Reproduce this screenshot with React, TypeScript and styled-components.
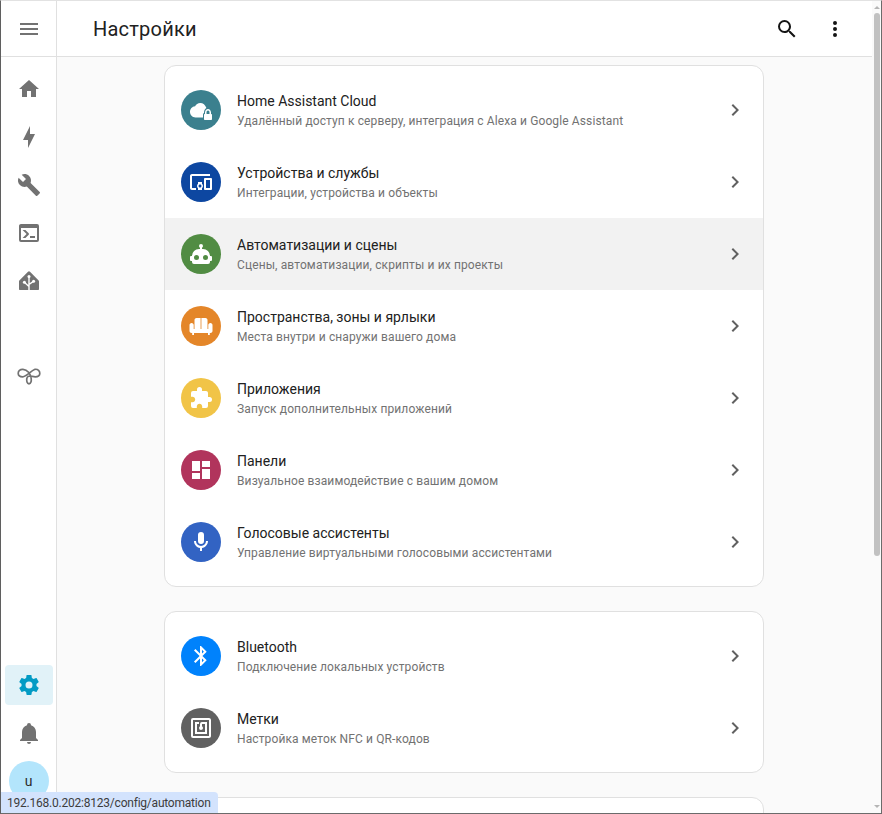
import React from "react";
import styled, { createGlobalStyle } from "styled-components";

const icons = {
  menu: "M3,6H21V8H3V6M3,11H21V13H3V11M3,16H21V18H3V16Z",
  home: "M10,20V14H14V20H19V12H22L12,3L2,12H5V20H10Z",
  bolt: "M11 15H6L13 1V9H18L11 23V15Z",
  wrench:
    "M22.7,19L13.6,9.9C14.5,7.6 14,4.9 12.1,3C10.1,1 7.1,0.6 4.7,1.7L9,6L6,9L1.6,4.7C0.4,7.1 0.9,10.1 2.9,12.1C4.8,14 7.5,14.5 9.8,13.6L18.9,22.7C19.3,23.1 19.9,23.1 20.3,22.7L22.6,20.4C23.1,20 23.1,19.3 22.7,19Z",
  console:
    "M20,19V7H4V19H20M20,3A2,2 0 0,1 22,5V19A2,2 0 0,1 20,21H4A2,2 0 0,1 2,19V5C2,3.89 2.9,3 4,3H20M13,17V15H18V17H13M9.58,13L5.57,9H8.4L11.7,12.3C12.09,12.69 12.09,13.33 11.7,13.72L8.42,17H5.59L9.58,13Z",
  cog: "M12,15.5A3.5,3.5 0 0,1 8.5,12A3.5,3.5 0 0,1 12,8.5A3.5,3.5 0 0,1 15.5,12A3.5,3.5 0 0,1 12,15.5M19.43,12.97C19.47,12.65 19.5,12.33 19.5,12C19.5,11.67 19.47,11.34 19.43,11L21.54,9.37C21.73,9.22 21.78,8.95 21.66,8.73L19.66,5.27C19.54,5.05 19.27,4.96 19.05,5.05L16.56,6.05C16.04,5.66 15.5,5.32 14.87,5.07L14.5,2.42C14.46,2.18 14.25,2 14,2H10C9.75,2 9.54,2.18 9.5,2.42L9.13,5.07C8.5,5.32 7.96,5.66 7.44,6.05L4.95,5.05C4.73,4.96 4.46,5.05 4.34,5.27L2.34,8.73C2.21,8.95 2.27,9.22 2.46,9.37L4.57,11C4.53,11.34 4.5,11.67 4.5,12C4.5,12.33 4.53,12.65 4.57,12.97L2.46,14.63C2.27,14.78 2.21,15.05 2.34,15.27L4.34,18.73C4.46,18.95 4.73,19.03 4.95,18.95L7.44,17.94C7.96,18.34 8.5,18.68 9.13,18.93L9.5,21.58C9.54,21.82 9.75,22 10,22H14C14.25,22 14.46,21.82 14.5,21.58L14.87,18.93C15.5,18.67 16.04,18.34 16.56,17.94L19.05,18.95C19.27,19.03 19.54,18.95 19.66,18.73L21.66,15.27C21.78,15.05 21.73,14.78 21.54,14.63L19.43,12.97Z",
  bell: "M21,19V20H3V19L5,17V11C5,7.9 7.03,5.17 10,4.29C10,4.19 10,4.1 10,4A2,2 0 0,1 12,2A2,2 0 0,1 14,4C14,4.1 14,4.19 14,4.29C16.97,5.17 19,7.9 19,11V17L21,19M14,21A2,2 0 0,1 12,23A2,2 0 0,1 10,21",
  magnify:
    "M9.5,3A6.5,6.5 0 0,1 16,9.5C16,11.11 15.41,12.59 14.44,13.73L14.71,14H15.5L20.5,19L19,20.5L14,15.5V14.71L13.73,14.44C12.59,15.41 11.11,16 9.5,16A6.5,6.5 0 0,1 3,9.5A6.5,6.5 0 0,1 9.5,3M9.5,5C7,5 5,7 5,9.5C5,12 7,14 9.5,14C12,14 14,12 14,9.5C14,7 12,5 9.5,5Z",
  dots: "M12,16A2,2 0 0,1 14,18A2,2 0 0,1 12,20A2,2 0 0,1 10,18A2,2 0 0,1 12,16M12,10A2,2 0 0,1 14,12A2,2 0 0,1 12,14A2,2 0 0,1 10,12A2,2 0 0,1 12,10M12,4A2,2 0 0,1 14,6A2,2 0 0,1 12,8A2,2 0 0,1 10,6A2,2 0 0,1 12,4Z",
  chevron: "M8.59,16.58L13.17,12L8.59,7.41L10,6L16,12L10,18L8.59,16.58Z",
  cloudLock:
    "M22 16V14.5C22 12.6 20.6 11 19 11S16 12.6 16 14.5V16C15.4 16 15 16.4 15 17V21C15 21.6 15.4 22 16 22H22C22.6 22 23 21.6 23 21V17C23 16.4 22.6 16 22 16M20.5 16H17.5V14.5C17.5 13.4 18.1 12.5 19 12.5S20.5 13.4 20.5 14.5V16ZM14 17C14 16 14.3 15.4 15 15V14.5C15 12.5 16 11 17.4 10.1C16.4 6.9 14 5 11.2 5C8.9 5 7 6.3 6.1 8.2C3 8.5 1 11 1 13.8C1 16.9 3.4 19.5 6.5 19.5H14V17Z",
  devices:
    "M3 6H21V4H3C1.9 4 1 4.9 1 6V18C1 19.1 1.9 20 3 20H7V18H3V6M13 12H9V13.78C8.39 14.33 8 15.11 8 16C8 16.89 8.39 17.67 9 18.22V20H13V18.22C13.61 17.67 14 16.88 14 16S13.61 14.33 13 13.78V12M11 17.5C10.17 17.5 9.5 16.83 9.5 16S10.17 14.5 11 14.5 12.5 15.17 12.5 16 11.83 17.5 11 17.5M22 8H16C15.5 8 15 8.5 15 9V19C15 19.5 15.5 20 16 20H22C22.5 20 23 19.5 23 19V9C23 8.5 22.5 8 22 8M21 18H17V10H21V18Z",
  robot:
    "M12,2A2,2 0 0,1 14,4C14,4.74 13.6,5.39 13,5.73V7H14A7,7 0 0,1 21,14H22A1,1 0 0,1 23,15V18A1,1 0 0,1 22,19H21V20A2,2 0 0,1 19,22H5A2,2 0 0,1 3,20V19H2A1,1 0 0,1 1,18V15A1,1 0 0,1 2,14H3A7,7 0 0,1 10,7H11V5.73C10.4,5.39 10,4.74 10,4A2,2 0 0,1 12,2M7.5,13A2.5,2.5 0 0,0 5,15.5A2.5,2.5 0 0,0 7.5,18A2.5,2.5 0 0,0 10,15.5A2.5,2.5 0 0,0 7.5,13M16.5,13A2.5,2.5 0 0,0 14,15.5A2.5,2.5 0 0,0 16.5,18A2.5,2.5 0 0,0 19,15.5A2.5,2.5 0 0,0 16.5,13Z",
  sofa: "M2.6 9C1.3 9 .5 10 .5 11.2V17C.5 18.2 1.5 19 2.6 19H3.2V21H5V19H19V21H20.8V19H21.4C22.5 19 23.5 18.2 23.5 17V11.2C23.5 10 22.7 9 21.4 9C20.1 9 19.3 10 19.3 11.2V15H4.7V11.2C4.7 10 3.9 9 2.6 9ZM11.6 4H7.5C6.2 4 5.5 5 5.5 6.2V15.2H11.6ZM18.5 6.2C18.5 5 17.8 4 16.5 4H12.4V15.2H18.5Z",
  puzzle:
    "M20.5,11H19V7C19,5.89 18.1,5 17,5H13V3.5A2.5,2.5 0 0,0 10.5,1A2.5,2.5 0 0,0 8,3.5V5H4A2,2 0 0,0 2,7V10.8H3.5C5,10.8 6.2,12 6.2,13.5C6.2,15 5,16.2 3.5,16.2H2V20A2,2 0 0,0 4,22H7.8V20.5C7.8,19 9,17.8 10.5,17.8C12,17.8 13.2,19 13.2,20.5V22H17A2,2 0 0,0 19,20V16H20.5A2.5,2.5 0 0,0 23,13.5A2.5,2.5 0 0,0 20.5,11Z",
  dashboard: "M13,3V9H21V3M13,21H21V11H13M3,21H11V15H3M3,13H11V3H3V13Z",
  microphone:
    "M12,2A3,3 0 0,1 15,5V11A3,3 0 0,1 12,14A3,3 0 0,1 9,11V5A3,3 0 0,1 12,2M19,11C19,14.53 16.39,17.44 13,17.93V21H11V17.93C7.61,17.44 5,14.53 5,11H7A5,5 0 0,0 12,16A5,5 0 0,0 17,11H19Z",
  bluetooth:
    "M14.88,16.29L13,18.17V14.41M13,5.83L14.88,7.71L13,9.58M17.71,7.71L12,2H11V9.58L6.41,5L5,6.41L10.59,12L5,17.58L6.41,19L11,14.41V22H12L17.71,16.29L13.41,12L17.71,7.71Z",
  nfc: "M18,6H13A2,2 0 0,0 11,8V10.28C10.41,10.62 10,11.25 10,12A2,2 0 0,0 12,14C13.11,14 14,13.1 14,12C14,11.25 13.59,10.62 13,10.28V8H16V16H8V8H10V6H8L6,6V18H18M20,20H4V4H20M20,2H4A2,2 0 0,0 2,4V20A2,2 0 0,0 4,22H20C21.11,22 22,21.1 22,20V4C22,2.89 21.11,2 20,2Z",
};

type IconName = keyof typeof icons;

const Icon = ({ name, className }: { name: IconName; className?: string }) => (
  <svg className={className} viewBox="0 0 24 24" width="24" height="24" fill="currentColor">
    <path d={icons[name]} />
  </svg>
);

// the house logo has a white tree inside, easier with strokes than a single path
const HouseLogo = () => (
  <svg viewBox="0 0 24 24" width="24" height="24">
    <path
      d="M12 2.2C12.4 2.2 12.7 2.5 13 2.8L21.4 11.2C21.8 11.6 22 12 22 12.5V20C22 20.6 21.6 21 21 21H3C2.4 21 2 20.6 2 20V12.5C2 12 2.2 11.6 2.6 11.2L11 2.8C11.3 2.5 11.6 2.2 12 2.2Z"
      fill="#727272"
    />
    <g fill="none" stroke="#fff" strokeWidth="1.4">
      <path d="M12 21V8M12 17.5L7.6 13.4M12 15.5L16.4 12.4" />
    </g>
    <circle cx="12" cy="7.6" r="1.5" fill="#fff" />
    <circle cx="7.4" cy="13.2" r="1.5" fill="#fff" />
    <circle cx="16.6" cy="12.2" r="1.5" fill="#fff" />
  </svg>
);

const KnotLogo = () => (
  <svg viewBox="0 0 24 24" width="24" height="24" fill="none" stroke="#727272" strokeWidth="1.7">
    <path d="M14.2 15.5C13.6 11 10.5 6.6 6 6.3C3 6.1 1.2 8 1.2 10.2C1.2 12.5 3.2 13.8 5.8 13.8C9.5 13.8 13.5 8 18 6.3C21 5.9 22.8 8 22.8 10.2C22.8 12.5 20.8 13.8 18.2 13.8C14.8 13.8 10.4 11.5 9.8 15.5C9.4 18 10 20.8 12 20.8C14 20.8 14.5 18 14.2 15.5Z" />
  </svg>
);

type Row = {
  icon: IconName;
  color: string;
  title: string;
  text: string;
  hovered?: boolean;
};

const firstGroup: Row[] = [
  {
    icon: "cloudLock",
    color: "#3b808e",
    title: "Home Assistant Cloud",
    text: "Удалённый доступ к серверу, интеграция с Alexa и Google Assistant",
  },
  {
    icon: "devices",
    color: "#0d47a1",
    title: "Устройства и службы",
    text: "Интеграции, устройства и объекты",
  },
  {
    icon: "robot",
    color: "#518c43",
    title: "Автоматизации и сцены",
    text: "Сцены, автоматизации, скрипты и их проекты",
    hovered: true,
  },
  {
    icon: "sofa",
    color: "#e48629",
    title: "Пространства, зоны и ярлыки",
    text: "Места внутри и снаружи вашего дома",
  },
  {
    icon: "puzzle",
    color: "#f1c447",
    title: "Приложения",
    text: "Запуск дополнительных приложений",
  },
  {
    icon: "dashboard",
    color: "#b1345c",
    title: "Панели",
    text: "Визуальное взаимодействие с вашим домом",
  },
  {
    icon: "microphone",
    color: "#3263c3",
    title: "Голосовые ассистенты",
    text: "Управление виртуальными голосовыми ассистентами",
  },
];

const secondGroup: Row[] = [
  {
    icon: "bluetooth",
    color: "#0082fc",
    title: "Bluetooth",
    text: "Подключение локальных устройств",
  },
  {
    icon: "nfc",
    color: "#616161",
    title: "Метки",
    text: "Настройка меток NFC и QR-кодов",
  },
];

const topNav: IconName[] = ["home", "bolt", "wrench", "console"];

const App = () => (
  <Frame>
    <GlobalStyle />
    <Sidebar>
      <SidebarHead>
        <SideIcon name="menu" />
      </SidebarHead>
      <NavList>
        {topNav.map((name) => (
          <NavItem key={name}>
            <SideIcon name={name} />
          </NavItem>
        ))}
        <NavItem>
          <HouseLogo />
        </NavItem>
        <KnotItem>
          <KnotLogo />
        </KnotItem>
      </NavList>
      <SidebarFoot>
        <ActiveItem>
          <Icon name="cog" />
        </ActiveItem>
        <NavItem>
          <SideIcon name="bell" />
        </NavItem>
        <Avatar>u</Avatar>
      </SidebarFoot>
    </Sidebar>
    <Content>
      <Header>
        <Title>Настройки</Title>
        <HeaderButton>
          <Icon name="magnify" />
        </HeaderButton>
        <HeaderButton>
          <Icon name="dots" />
        </HeaderButton>
      </Header>
      <Main>
        <Card>
          {firstGroup.map((row) => (
            <SettingsRow key={row.title} row={row} />
          ))}
        </Card>
        <Card>
          {secondGroup.map((row) => (
            <SettingsRow key={row.title} row={row} />
          ))}
        </Card>
        <Card>
          <EmptyRow />
        </Card>
      </Main>
    </Content>
    <Scrollbar>
      <ArrowUp />
      <Track>
        <Thumb />
      </Track>
      <ArrowDown />
    </Scrollbar>
    <StatusBubble>192.168.0.202:8123/config/automation</StatusBubble>
  </Frame>
);

const SettingsRow = ({ row }: { row: Row }) => (
  <RowBox $hovered={row.hovered}>
    <RoundIcon $color={row.color}>
      <Icon name={row.icon} />
    </RoundIcon>
    <RowText>
      <RowTitle>{row.title}</RowTitle>
      <RowSub>{row.text}</RowSub>
    </RowText>
    <Chevron name="chevron" />
  </RowBox>
);

const GlobalStyle = createGlobalStyle`
  html, body {
    margin: 0;
    padding: 0;
    height: 100%;
    overflow: hidden;
    background: #fafafa;
  }
  body {
    font-family: Roboto, "Liberation Sans", sans-serif;
  }
  * {
    box-sizing: border-box;
  }
`;

const Frame = styled.div`
  position: relative;
  display: flex;
  width: 882px;
  height: 814px;
  overflow: hidden;
  border-top: 1px solid #e2e2e2;
  border-left: 1px solid #5f5f5f;
  border-right: 1px solid #6b6b6b;
  border-bottom: 1px solid #6b6b6b;
  background: #fafafa;
`;

const Sidebar = styled.aside`
  width: 56px;
  flex: none;
  display: flex;
  flex-direction: column;
  background: #fff;
  border-right: 1px solid #e0e0e0;
`;

const SidebarHead = styled.div`
  height: 56px;
  flex: none;
  display: flex;
  align-items: center;
  justify-content: center;
  border-bottom: 1px solid #e0e0e0;
`;

const SideIcon = styled(Icon)`
  color: #727272;
`;

const NavList = styled.div`
  flex: 1;
  display: flex;
  flex-direction: column;
  padding-top: 8px;
`;

const NavItem = styled.div`
  height: 48px;
  flex: none;
  display: flex;
  align-items: center;
  justify-content: center;
`;

const KnotItem = styled(NavItem)`
  margin-top: 46px;
`;

const SidebarFoot = styled.div`
  display: flex;
  flex-direction: column;
  align-items: center;
  padding-bottom: 12px;
`;

const ActiveItem = styled.div`
  width: 48px;
  height: 40px;
  margin-bottom: 4px;
  display: flex;
  align-items: center;
  justify-content: center;
  border-radius: 4px;
  color: #039bc4;
  background: #e1f2f8;
`;

const Avatar = styled.div`
  width: 40px;
  height: 40px;
  margin-top: 4px;
  display: flex;
  align-items: center;
  justify-content: center;
  border-radius: 50%;
  background: #b3e5fc;
  color: #2c2c2c;
  font-size: 14px;
`;

const Content = styled.div`
  flex: 1;
  min-width: 0;
  display: flex;
  flex-direction: column;
`;

const Header = styled.header`
  height: 56px;
  flex: none;
  display: flex;
  align-items: center;
  padding: 0 13px 0 36px;
  background: #fff;
  border-bottom: 1px solid #e0e0e0;
`;

const Title = styled.h1`
  flex: 1;
  margin: 0;
  font-size: 20px;
  font-weight: 400;
  letter-spacing: 0.22px;
  color: #212121;
`;

const HeaderButton = styled.div`
  width: 48px;
  height: 48px;
  display: flex;
  align-items: center;
  justify-content: center;
  color: #141414;
`;

const Main = styled.main`
  flex: 1;
  min-height: 0;
  overflow: hidden;
  display: flex;
  flex-direction: column;
  align-items: flex-start;
  gap: 24px;
  padding: 8px 0 0 107px;
`;

const Card = styled.section`
  width: 600px;
  flex: none;
  padding: 8px 0;
  background: #fff;
  border: 1px solid #e0e0e0;
  border-radius: 12px;
  overflow: hidden;
`;

const RowBox = styled.div<{ $hovered?: boolean }>`
  height: 72px;
  display: flex;
  align-items: center;
  padding: 0 16px;
  background: ${(props) => (props.$hovered ? "#f2f2f2" : "transparent")};
`;

const EmptyRow = styled.div`
  height: 72px;
`;

const RoundIcon = styled.div<{ $color: string }>`
  width: 40px;
  height: 40px;
  flex: none;
  display: flex;
  align-items: center;
  justify-content: center;
  border-radius: 50%;
  color: #fff;
  background: ${(props) => props.$color};
`;

const RowText = styled.div`
  flex: 1;
  min-width: 0;
  margin-left: 16px;
  padding-top: 2px;
`;

const RowTitle = styled.div`
  font-size: 14px;
  line-height: 20px;
  color: #212121;
`;

const RowSub = styled.div`
  font-size: 12px;
  line-height: 20px;
  letter-spacing: 0.12px;
  color: #727272;
`;

const Chevron = styled(Icon)`
  flex: none;
  color: #616161;
`;

const Scrollbar = styled.div`
  width: 9px;
  flex: none;
  display: flex;
  flex-direction: column;
  align-items: center;
  background: #fafafa;
`;

const ArrowUp = styled.div`
  flex: none;
  margin: 5px 0 4px;
  border-left: 3px solid transparent;
  border-right: 3px solid transparent;
  border-bottom: 3px solid #b5b5b5;
`;

const ArrowDown = styled.div`
  flex: none;
  margin: 4px 0 5px;
  border-left: 3px solid transparent;
  border-right: 3px solid transparent;
  border-top: 3px solid #b5b5b5;
`;

const Track = styled.div`
  flex: 1;
  width: 100%;
  display: flex;
  justify-content: center;
`;

const Thumb = styled.div`
  width: 6px;
  height: 543px;
  border-radius: 3px;
  background: #c1c1c1;
`;

const StatusBubble = styled.div`
  position: absolute;
  left: 0;
  bottom: 0;
  width: 217px;
  height: 21px;
  padding-left: 6px;
  display: flex;
  align-items: center;
  font-size: 12px;
  letter-spacing: -0.22px;
  color: #3c3c3c;
  background: #d3e3fd;
  border-top-right-radius: 4px;
  white-space: nowrap;
`;

export default App;
